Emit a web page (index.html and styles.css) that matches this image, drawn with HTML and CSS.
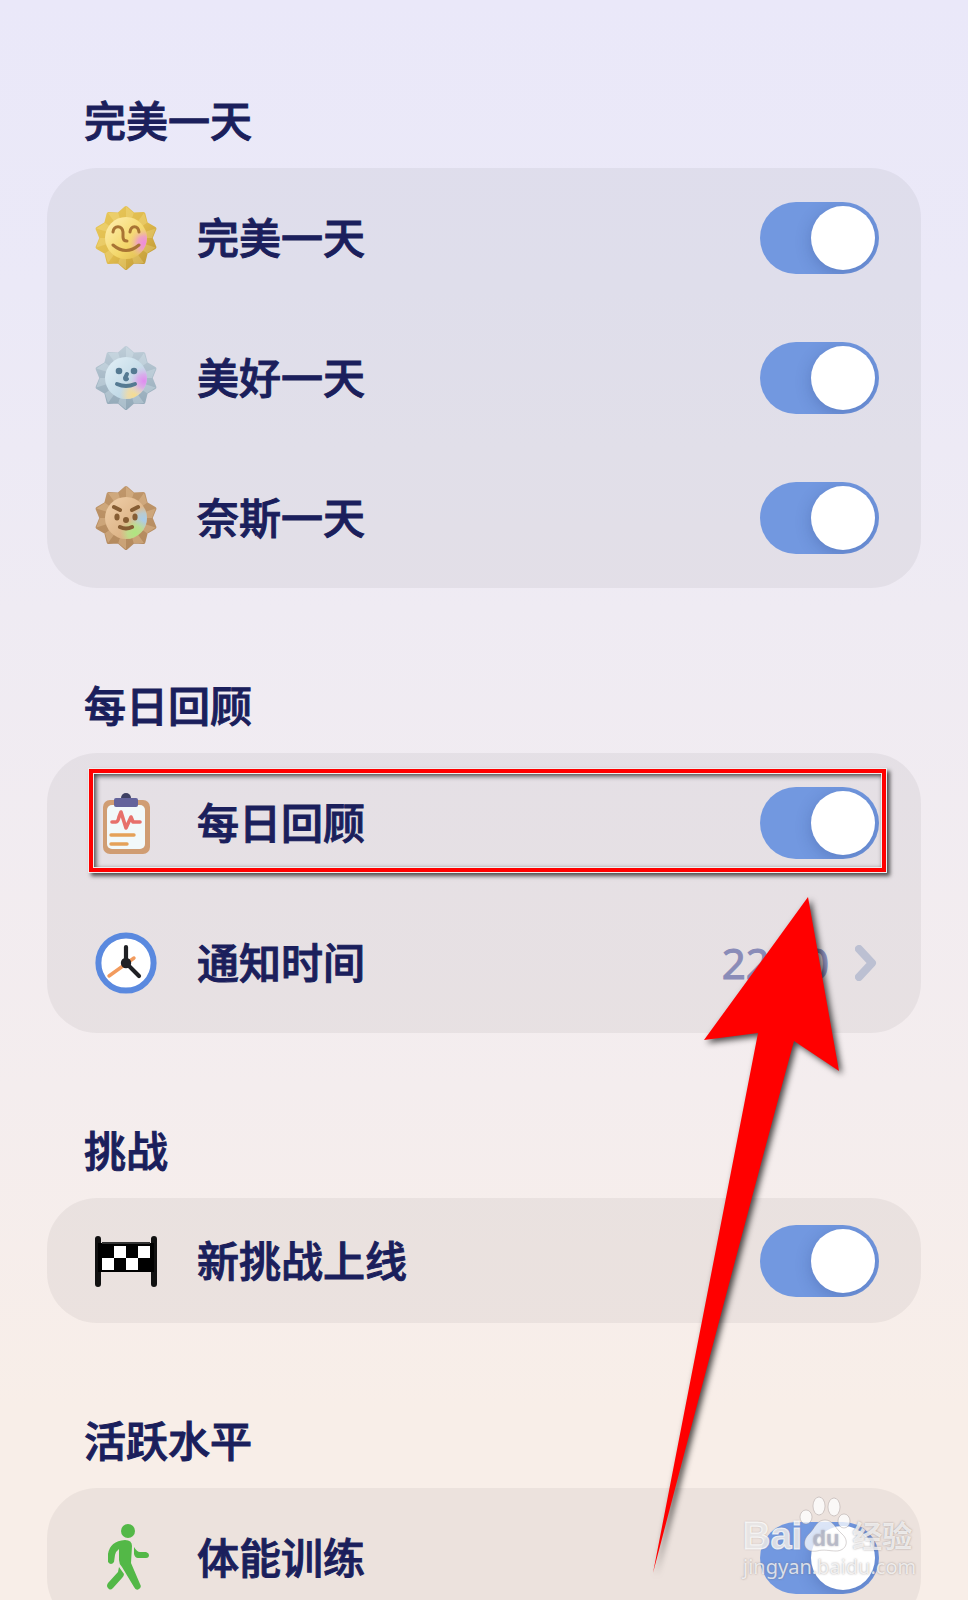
FILE: index.html
```
<!DOCTYPE html>
<html lang="zh-CN">
<head>
<meta charset="utf-8">
<meta name="viewport" content="width=device-width, initial-scale=1">
<title>通知设置</title>
<link rel="stylesheet" href="styles.css">
</head>
<body>
<svg class="defs" aria-hidden="true">
  <defs>
    <path id="gear" stroke-width="4" stroke-linejoin="round" d="M0-30L7.4-23.6 17.4-24 19.8-14.4 28.4-9.2 24.6 0 28.4 9.2 19.8 14.4 17.4 24 7.4 23.6 0 30-7.4 23.6-17.4 24-19.8 14.4-28.4 9.2-24.6 0-28.4-9.2-19.8-14.4-17.4-24-7.4-23.6z"/>
    <path id="facets" d="M0 0V-31.5L7.7-25zM0 0L18-25 21-15.2zM0 0L29.6-9.6 26 0zM0 0L29.6 9.6 21 15.2zM0 0L18 25 7.7 25zM0 0V31.5L-7.7 25zM0 0L-18 25-21 15.2zM0 0L-29.6 9.6-26 0zM0 0L-29.6-9.6-21-15.2zM0 0L-18-25-7.7-25z"/>
    <linearGradient id="goldEdge" x1="0" y1="0" x2="1" y2="1"><stop offset="0" stop-color="#e8c85a"/><stop offset=".55" stop-color="#dfba4c"/><stop offset="1" stop-color="#bb9434"/></linearGradient>
    <linearGradient id="silverEdge" x1="0" y1="0" x2="0" y2="1"><stop offset="0" stop-color="#bdccd7"/><stop offset="1" stop-color="#93a9b8"/></linearGradient>
    <linearGradient id="bronzeEdge" x1="0" y1="0" x2="0" y2="1"><stop offset="0" stop-color="#bf966a"/><stop offset="1" stop-color="#b48a5e"/></linearGradient>
    <linearGradient id="goldFace" x1="0" y1="0" x2="1" y2="1"><stop offset="0" stop-color="#fff0b4"/><stop offset=".6" stop-color="#f3d76a"/><stop offset="1" stop-color="#ddb74d"/></linearGradient>
    <linearGradient id="silverFace" x1="0" y1="0" x2="1" y2="1"><stop offset="0" stop-color="#e3f0f7"/><stop offset="1" stop-color="#afcddd"/></linearGradient>
    <linearGradient id="bronzeFace" x1="0" y1="0" x2="1" y2="1"><stop offset="0" stop-color="#f0d0aa"/><stop offset="1" stop-color="#d3a675"/></linearGradient>
    <radialGradient id="pink"><stop offset="0" stop-color="#ee8bdd"/><stop offset=".4" stop-color="#ee9bcf" stop-opacity=".85"/><stop offset="1" stop-color="#f4cf8c" stop-opacity="0"/></radialGradient>
    <radialGradient id="violet"><stop offset="0" stop-color="#e28af0"/><stop offset=".4" stop-color="#dda5ec" stop-opacity=".8"/><stop offset="1" stop-color="#cfe0ee" stop-opacity="0"/></radialGradient>
    <radialGradient id="yellow"><stop offset="0" stop-color="#f7dc8e"/><stop offset=".5" stop-color="#f5dca0" stop-opacity=".8"/><stop offset="1" stop-color="#eedcb0" stop-opacity="0"/></radialGradient>
    <radialGradient id="green"><stop offset="0" stop-color="#aee680"/><stop offset=".5" stop-color="#b8e48c" stop-opacity=".8"/><stop offset="1" stop-color="#c8dc90" stop-opacity="0"/></radialGradient>
    <radialGradient id="blue"><stop offset="0" stop-color="#a8cdec"/><stop offset=".5" stop-color="#b0d0e0" stop-opacity=".8"/><stop offset="1" stop-color="#c2cfcd" stop-opacity="0"/></radialGradient>
    <clipPath id="faceClip"><circle r="21"/></clipPath>
  </defs>
</svg>

<main class="screen">
  <section class="group">
    <h2 class="group-title">完美一天</h2>
    <div class="card">
      <label class="row">
        <svg class="icon" viewBox="-32 -32 64 64" aria-hidden="true">
          <use href="#gear" fill="url(#goldEdge)" stroke="url(#goldEdge)"/>
          <use href="#facets" fill="#fff0a8" opacity=".25"/>
          <circle r="21" fill="url(#goldFace)"/>
          <g clip-path="url(#faceClip)"><circle cx="18" cy="5" r="16" fill="url(#pink)"/></g>
          <g class="strokes gold-lines"><path d="M-13-6C-12-13-4-13-3-6L-3-1Q-3 3 1 3"/><path d="M4-6C5-13 12-13 13-6"/><path d="M-13 7Q0 18 13 7"/></g>
        </svg>
        <span class="label">完美一天</span>
        <input class="switch" type="checkbox" role="switch" checked>
      </label>
      <label class="row">
        <svg class="icon" viewBox="-32 -32 64 64" aria-hidden="true">
          <use href="#gear" fill="url(#silverEdge)" stroke="url(#silverEdge)"/>
          <use href="#facets" fill="#e0eff6" opacity=".3"/>
          <circle r="21" fill="url(#silverFace)"/>
          <g clip-path="url(#faceClip)"><circle cx="9" cy="17" r="15" fill="url(#yellow)"/><circle cx="18" cy="3" r="17" fill="url(#violet)"/></g>
          <g fill="#557a92"><circle cx="-7" cy="-7" r="3.3"/><circle cx="8" cy="-7" r="3.3"/></g>
          <g class="strokes silver-lines"><path d="M1-4L-1 0Q-1 2 1 1"/><path d="M-9 6Q0 10 9 6"/></g>
        </svg>
        <span class="label">美好一天</span>
        <input class="switch" type="checkbox" role="switch" checked>
      </label>
      <label class="row">
        <svg class="icon" viewBox="-32 -32 64 64" aria-hidden="true">
          <use href="#gear" fill="url(#bronzeEdge)" stroke="url(#bronzeEdge)"/>
          <use href="#facets" fill="#f1cda2" opacity=".35"/>
          <circle r="21" fill="url(#bronzeFace)"/>
          <g clip-path="url(#faceClip)"><circle cx="18" cy="2" r="14" fill="url(#blue)"/><circle cx="9" cy="15" r="15" fill="url(#green)"/></g>
          <g fill="#865d33"><ellipse cx="-9" cy="-1" rx="2.6" ry="3.6"/><ellipse cx="9" cy="-1" rx="2.6" ry="3.6"/><circle cx="0" cy="2" r="3"/></g>
          <g class="strokes bronze-lines"><path d="M-12-11L-6-8M6-8L12-11M-6 9Q0 12 6 9"/></g>
        </svg>
        <span class="label">奈斯一天</span>
        <input class="switch" type="checkbox" role="switch" checked>
      </label>
    </div>
  </section>

  <section class="group">
    <h2 class="group-title">每日回顾</h2>
    <div class="card">
      <label class="row">
        <svg class="icon" viewBox="0 0 64 64" aria-hidden="true">
          <rect x="9" y="9" width="47" height="54" rx="7" fill="#d09d73"/>
          <rect x="13" y="14" width="38" height="44" rx="5" fill="#f2f9fa"/>
          <circle cx="32" cy="7" r="5" fill="#3e4063"/>
          <rect x="20" y="7" width="24" height="9" rx="2" fill="#63639b"/>
          <path d="M18 31H22Q24 31 25 26L27 21 32 37 37 26 39 31H46" fill="none" stroke="#e7706b" stroke-width="3.6" stroke-linecap="round" stroke-linejoin="round"/>
          <path d="M17 44H40M17 53H33" stroke="#e5a158" stroke-width="3.4" stroke-linecap="round"/>
        </svg>
        <span class="label">每日回顾</span>
        <input class="switch" type="checkbox" role="switch" checked>
      </label>
      <button class="row" type="button">
        <svg class="icon" viewBox="0 0 64 64" aria-hidden="true">
          <circle cx="32" cy="32" r="27.6" fill="#fff" stroke="#5a89df" stroke-width="6"/>
          <path d="M15 45L40 27" stroke="#f29b5e" stroke-width="3.4" stroke-linecap="round"/>
          <path d="M32 16V32L45 45" fill="none" stroke="#1f2024" stroke-width="4.2" stroke-linecap="round"/>
          <circle cx="32" cy="32" r="5.2" fill="#1f2024"/>
        </svg>
        <span class="label">通知时间</span>
        <span class="value">22:00</span>
        <svg class="chevron" viewBox="0 0 24 36" aria-hidden="true"><path d="M4 4L17 18 4 32"/></svg>
      </button>
      <div class="highlight" aria-hidden="true"></div>
      <svg class="arrow" viewBox="0 0 190 680" aria-hidden="true">
        <path d="M156 0L52 143 106 136 1 676Q92 328 142 144L187 174z"/>
      </svg>
    </div>
  </section>

  <section class="group">
    <h2 class="group-title">挑战</h2>
    <div class="card">
      <label class="row row-compact">
        <svg class="icon" viewBox="0 0 64 64" aria-hidden="true">
          <path d="M4 10V55M60 10V55" stroke="#111" stroke-width="6" stroke-linecap="round"/>
          <rect x="4" y="14" width="56" height="29" fill="#000"/>
          <path d="M8 14H56" stroke="#333" stroke-width="2"/>
          <path d="M20 17H32V29H20zM44 17H56V29H44zM8 29H20V41H8zM32 29H44V41H32z" fill="#fff"/>
        </svg>
        <span class="label">新挑战上线</span>
        <input class="switch" type="checkbox" role="switch" checked>
      </label>
    </div>
  </section>

  <section class="group">
    <h2 class="group-title">活跃水平</h2>
    <div class="card">
      <label class="row">
        <svg class="icon" viewBox="0 0 64 64" aria-hidden="true">
          <g fill="#53b847"><circle cx="34" cy="5" r="7"/>
          <path d="M31 14Q38 14 38 20L37 37 46 58Q48 61 45 63 42 65 40 61L28 41Q25 38 25 34V23Q22 25 21 29L20 36Q17 40 14 36V28Q16 15 31 14z"/>
          <path d="M25 41L30 48Q30 50 28 52L19 62Q16 65 14 62 12 60 14 57L24 46z"/>
          <path d="M40 21Q43 26 46 26H52Q55 27 55 29 55 32 52 32H44Q41 32 40 28z"/></g>
        </svg>
        <span class="label">体能训练</span>
        <input class="switch" type="checkbox" role="switch" checked>
      </label>
      <div class="watermark" aria-hidden="true">
        <div class="wm-logo">
          <span class="wm-bai">Bai</span>
          <svg class="wm-paw" viewBox="0 0 52 56">
            <g class="wm-shape"><ellipse cx="6" cy="21" rx="6" ry="7"/><ellipse cx="19" cy="10" rx="6" ry="9"/><ellipse cx="34" cy="11" rx="6" ry="9"/><ellipse cx="44" cy="25" rx="6" ry="7"/>
            <path d="M25 24C33 24 35 32 42 38 50 45 46 55 36 55 29 55 24 53 17 55 5 57 1 47 8 39 15 33 16 24 25 24z"/></g>
            <text x="26" y="50" text-anchor="middle">du</text>
          </svg>
          <span class="wm-cn">经验</span>
        </div>
        <div class="wm-url">jingyan.baidu.com</div>
      </div>
    </div>
  </section>
</main>
</body>
</html>
```

FILE: styles.css
```
* { box-sizing: border-box; }

body {
  margin: 0;
  color: #1b1f5c;
  font-family: "Noto Sans CJK SC", "Noto Sans", sans-serif;
}

.defs { position: absolute; width: 0; height: 0; }

.screen {
  height: 100vh;
  overflow-y: auto;
  scrollbar-width: none;
  padding: 89px 47px 0;
  display: flex;
  flex-direction: column;
  gap: 86px;
  background: linear-gradient(#eae8f9 0%, #ebe9f7 18%, #efebf3 38%, #f4edee 68%, #f8eee8 88%, #f8eee8 100%);
}

.group { flex: none; }

.group-title {
  margin: 0 0 19px;
  padding-left: 37px;
  font-size: 42px;
  font-weight: 500;
  line-height: 60px;
  -webkit-text-stroke: 1px currentColor;
}

.card {
  position: relative;
  border-radius: 50px;
  background: rgba(0, 0, 0, 0.047);
}

.row {
  display: flex;
  align-items: center;
  width: 100%;
  height: 140px;
  padding: 0 42px 0 47px;
  border: 0;
  background: none;
  color: inherit;
  font: inherit;
  text-align: left;
  cursor: pointer;
}

.row-compact { height: 125px; }

.icon {
  flex: none;
  width: 64px;
  height: 64px;
  margin-right: 39px;
  overflow: visible;
}

.label {
  flex: 1;
  padding-bottom: 4px;
  font-size: 42px;
  font-weight: 500;
  line-height: 60px;
  -webkit-text-stroke: 1px currentColor;
}

.strokes { fill: none; stroke-width: 3; stroke-linecap: round; stroke-linejoin: round; }
.gold-lines { stroke: #a87434; }
.silver-lines { stroke: #557a92; stroke-width: 4; }
.bronze-lines { stroke: #865d33; stroke-width: 4; }

.switch {
  appearance: none;
  flex: none;
  width: 119px;
  height: 72px;
  margin: 0;
  padding: 4px;
  border-radius: 36px;
  background: #bfc2d0;
  display: flex;
  align-items: center;
  overflow: hidden;
  cursor: pointer;
}

.switch::before {
  content: "";
  width: 64px;
  height: 64px;
  border-radius: 50%;
  background: #fff;
  box-shadow: 0 4px 16px rgba(30, 50, 110, 0.25);
}

.switch:checked {
  background: #7298e0;
  justify-content: flex-end;
}

.value {
  margin-right: 26px;
  color: #8a8cb8;
  font-family: "Noto Sans", sans-serif;
  font-size: 42px;
  line-height: 60px;
  -webkit-text-stroke: 1px currentColor;
}

.chevron { flex: none; width: 24px; height: 36px; }
.chevron path {
  fill: none;
  stroke: #bcc0d2;
  stroke-width: 8;
  stroke-linecap: round;
  stroke-linejoin: round;
}

.highlight {
  position: absolute;
  top: 16px;
  right: 35px;
  left: 42px;
  height: 103px;
  border: 4px solid #f00;
  outline: 1px solid #eee;
  box-shadow: 3px 3px 4px 1px rgba(0, 0, 0, 0.65), inset 0 0 0 1px #eee, inset 2px 2px 5px 1px rgba(0, 0, 0, 0.7);
  pointer-events: none;
}

.arrow {
  position: absolute;
  z-index: 2;
  top: 144px;
  right: 79px;
  width: 190px;
  height: 680px;
  overflow: visible;
  fill: #f00;
  filter: drop-shadow(3px 3px 3px rgba(0, 0, 0, 0.7));
  pointer-events: none;
}

.watermark {
  position: absolute;
  top: 8px;
  right: 6px;
  width: 172px;
  color: rgba(255, 255, 255, 0.75);
  text-shadow: 0 0 2px rgba(110, 100, 100, 0.6);
  white-space: nowrap;
  pointer-events: none;
}

.wm-logo { display: flex; align-items: flex-end; height: 56px; }
.wm-bai {
  font: bold 38px/32px "Liberation Sans", sans-serif;
  -webkit-text-stroke: 1px rgba(255, 255, 255, 0.75);
}
.wm-paw { flex: none; width: 52px; height: 56px; overflow: visible; margin-left: -2px; }
.wm-shape { fill: rgba(255, 255, 255, 0.75); stroke: rgba(140, 130, 130, 0.35); stroke-width: 1; }
.wm-paw text { fill: rgba(180, 184, 202, 0.8); font: bold 22px "Liberation Sans", sans-serif; }
.wm-cn { font-size: 30px; font-weight: 700; line-height: 36px; }
.wm-url { padding-top: 2px; font: 20px/26px "Noto Sans", sans-serif; }
```
